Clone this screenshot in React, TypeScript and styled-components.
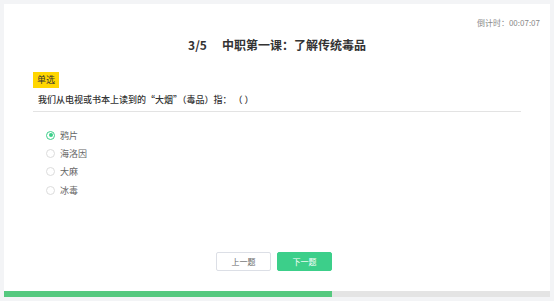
import styled, { createGlobalStyle } from "styled-components";

const options = ["鸦片", "海洛因", "大麻", "冰毒"];
const current = 3;
const total = 5;

const GlobalStyle = createGlobalStyle`
  html, body {
    margin: 0;
    padding: 0;
    background: #f3f4f6;
  }
  body {
    font-family: "Noto Sans CJK SC", "Noto Sans", sans-serif;
  }
`;

export default function App() {
  return (
    <>
      <GlobalStyle />
      <Page>
        <Card>
          <Countdown>倒计时：00:07:07</Countdown>
          <Title>
            <Index>
              {current}/{total}
            </Index>
            中职第一课：了解传统毒品
          </Title>
          <Body>
            <Tag>单选</Tag>
            <Question>我们从电视或书本上读到的“大烟”（毒品）指： （ ）</Question>
            <OptionList>
              {options.map((label, i) => (
                <Option key={label}>
                  <Radio checked={i === 0} />
                  <OptionLabel>{label}</OptionLabel>
                </Option>
              ))}
            </OptionList>
          </Body>
          <Actions>
            <Button>上一题</Button>
            <Button primary>下一题</Button>
          </Actions>
          <Progress>
            <ProgressFill style={{ width: `${(current / total) * 100}%` }} />
          </Progress>
        </Card>
      </Page>
    </>
  );
}

const Page = styled.div`
  padding: 4px;
  width: 554px;
  height: 301px;
  box-sizing: border-box;
`;

const Card = styled.div`
  background: #fff;
  height: 293px;
  display: flex;
  flex-direction: column;
`;

const Countdown = styled.div`
  padding: 13px 10px 0 0;
  text-align: right;
  font-size: 8px;
  line-height: 12px;
  color: #8a8a8a;
`;

const Title = styled.h1`
  margin: 8px 0 0;
  text-align: center;
  font-size: 12px;
  line-height: 16px;
  font-weight: bold;
  color: #333;
`;

const Index = styled.span`
  margin-right: 15px;
`;

const Body = styled.div`
  padding: 0 29px;
  flex: 1;
`;

const Tag = styled.span`
  display: inline-block;
  margin-top: 19px;
  padding: 0 4px;
  height: 16px;
  line-height: 16px;
  font-size: 9px;
  color: #333;
  background: #ffd600;
`;

const Question = styled.div`
  margin-top: 5px;
  padding: 0 5px 4px;
  font-size: 9px;
  line-height: 14px;
  font-weight: 500;
  color: #333;
  border-bottom: 1px solid #e3e3e3;
`;

const OptionList = styled.ul`
  list-style: none;
  margin: 14px 0 0;
  padding: 0 0 0 13px;
`;

const Option = styled.li`
  display: flex;
  align-items: center;
  gap: 5px;
  height: 18.4px;
`;

const Radio = styled.span<{ checked?: boolean }>`
  box-sizing: border-box;
  width: 9px;
  height: 9px;
  border-radius: 50%;
  border: 1px solid ${({ checked }) => (checked ? "#3ccf8a" : "#dcdcdc")};
  display: flex;
  align-items: center;
  justify-content: center;

  &::after {
    content: "";
    width: 4px;
    height: 4px;
    border-radius: 50%;
    background: ${({ checked }) => (checked ? "#3ccf8a" : "transparent")};
  }
`;

const OptionLabel = styled.span`
  font-size: 9px;
  color: #666;
`;

const Actions = styled.div`
  display: flex;
  justify-content: center;
  gap: 6px;
  padding-right: 6px;
  margin-bottom: 20px;
`;

const Button = styled.button<{ primary?: boolean }>`
  box-sizing: border-box;
  width: 55px;
  height: 19px;
  padding: 0;
  font-family: inherit;
  font-size: 8px;
  border-radius: 2px;
  cursor: pointer;
  border: 1px solid ${({ primary }) => (primary ? "#3ccf8a" : "#dcdfe6")};
  background: ${({ primary }) => (primary ? "#3ccf8a" : "#fff")};
  color: ${({ primary }) => (primary ? "#fff" : "#666")};
`;

const Progress = styled.div`
  height: 6px;
  background: #e4e4e4;
`;

const ProgressFill = styled.div`
  height: 100%;
  background: #55c97f;
`;
